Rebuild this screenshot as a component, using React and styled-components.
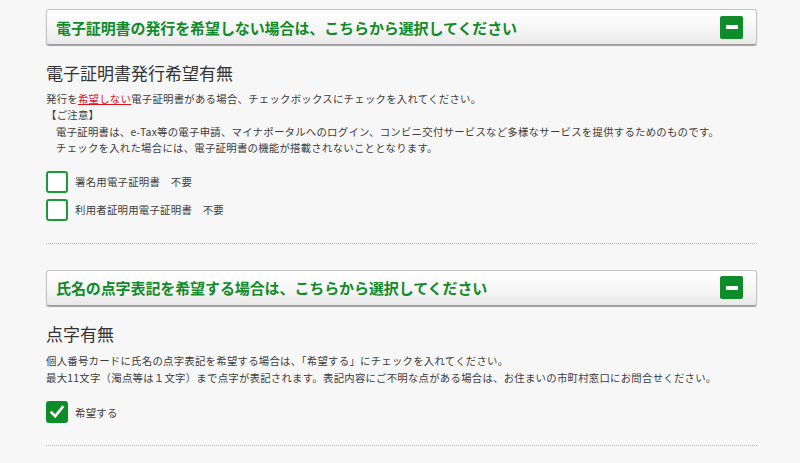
import React from 'react'
import styled, { createGlobalStyle } from 'styled-components'

const GlobalStyle = createGlobalStyle`
  html, body {
    margin: 0;
    padding: 0;
    background: #f7f7f7;
  }
  body {
    font-family: "Noto Sans CJK JP", "Noto Sans", sans-serif;
    color: #3c3c3c;
  }
`

const Page = styled.div`
  width: 711px;
  margin-left: 46px;
  padding-top: 9px;
`

const Section = styled.section`
  padding-bottom: 22px;
  border-bottom: 1px dotted #b4b4b4;
  margin-bottom: 26px;
`

const Bar = styled.div`
  box-sizing: border-box;
  height: 36px;
  display: flex;
  align-items: center;
  justify-content: space-between;
  padding: 0 13px 0 9px;
  border: 1px solid #c4c4c4;
  border-bottom-color: #9a9a9a;
  border-radius: 3px;
  background: linear-gradient(#ffffff 0%, #f6f6f6 55%, #e9e9e9 100%);
  box-shadow: 0 1px 1px rgba(0, 0, 0, 0.35);
`

const BarTitle = styled.h2`
  margin: 0;
  font-size: 15px;
  font-weight: bold;
  color: #118a2a;
  letter-spacing: -0.1px;
`

const Toggle = styled.span`
  width: 23px;
  height: 23px;
  border-radius: 2px;
  background: #0e8c2a;
  display: flex;
  align-items: center;
  justify-content: center;

  &::after {
    content: '';
    width: 12px;
    height: 4px;
    background: #fff;
  }
`

const Heading = styled.h3`
  margin: ${({ $top }) => $top}px 0 6px;
  font-size: 17px;
  line-height: 24px;
  font-weight: normal;
  color: #333;
`

const Text = styled.p`
  margin: 0;
  font-size: 10.4px;
  letter-spacing: 0.25px;
  line-height: ${({ $lh }) => $lh}px;
  padding-left: ${({ $indent }) => ($indent ? 10 : 0)}px;
  white-space: nowrap;
`

const Alert = styled.span`
  color: #e0141e;
  text-decoration: underline;
`

const Checks = styled.div`
  margin-top: ${({ $top }) => $top}px;
  display: flex;
  flex-direction: column;
  gap: 6px;
`

const CheckRow = styled.label`
  display: flex;
  align-items: center;
  gap: 7px;
  font-size: 10.4px;
  letter-spacing: 0.25px;
`

const Box = styled.span`
  box-sizing: border-box;
  width: 22px;
  height: 22px;
  border-radius: 3px;
  border: 2px solid #1c9a3a;
  background: ${({ $checked }) => ($checked ? '#0e8c2a' : '#fff')};
  border-color: ${({ $checked }) => ($checked ? '#0e8c2a' : '#1c9a3a')};
  display: flex;
  align-items: center;
  justify-content: center;
`

const CheckBox = ({ checked, children }) => (
  <CheckRow>
    <Box $checked={ checked }>
      { checked && (
        <svg width="16" height="16" viewBox="0 0 16 16">
          <polyline points="2.5,8.5 6.2,12.2 13.5,3.2" fill="none"
            stroke="#fff" strokeWidth="2.6" strokeLinecap="square" />
        </svg>
      ) }
    </Box>
    { children }
  </CheckRow>
)

const Panel = ({ title, children }) => (
  <Section>
    <Bar>
      <BarTitle>{ title }</BarTitle>
      <Toggle />
    </Bar>
    { children }
  </Section>
)

const App = () => (
  <Page>
    <GlobalStyle />
    <Panel title="電子証明書の発行を希望しない場合は、こちらから選択してください">
      <Heading $top={ 16 }>電子証明書発行希望有無</Heading>
      <Text $lh={ 16.4 }>
        発行を<Alert>希望しない</Alert>電子証明書がある場合、チェックボックスにチェックを入れてください。
      </Text>
      <Text $lh={ 16.4 }>【ご注意】</Text>
      <Text $lh={ 16.4 } $indent>
        電子証明書は、e-Tax等の電子申請、マイナポータルへのログイン、コンビニ交付サービスなど多様なサービスを提供するためのものです。
      </Text>
      <Text $lh={ 16.4 } $indent>
        チェックを入れた場合には、電子証明書の機能が搭載されないこととなります。
      </Text>
      <Checks $top={ 14 }>
        <CheckBox>署名用電子証明書　不要</CheckBox>
        <CheckBox>利用者証明用電子証明書　不要</CheckBox>
      </Checks>
    </Panel>
    <Panel title="氏名の点字表記を希望する場合は、こちらから選択してください">
      <Heading $top={ 16 }>点字有無</Heading>
      <Text $lh={ 17.2 }>
        個人番号カードに氏名の点字表記を希望する場合は、「希望する」にチェックを入れてください。
      </Text>
      <Text $lh={ 17.2 }>
        最大11文字（濁点等は１文字）まで点字が表記されます。表記内容にご不明な点がある場合は、お住まいの市町村窓口にお問合せください。
      </Text>
      <Checks $top={ 15 }>
        <CheckBox checked>希望する</CheckBox>
      </Checks>
    </Panel>
  </Page>
)

export default App
